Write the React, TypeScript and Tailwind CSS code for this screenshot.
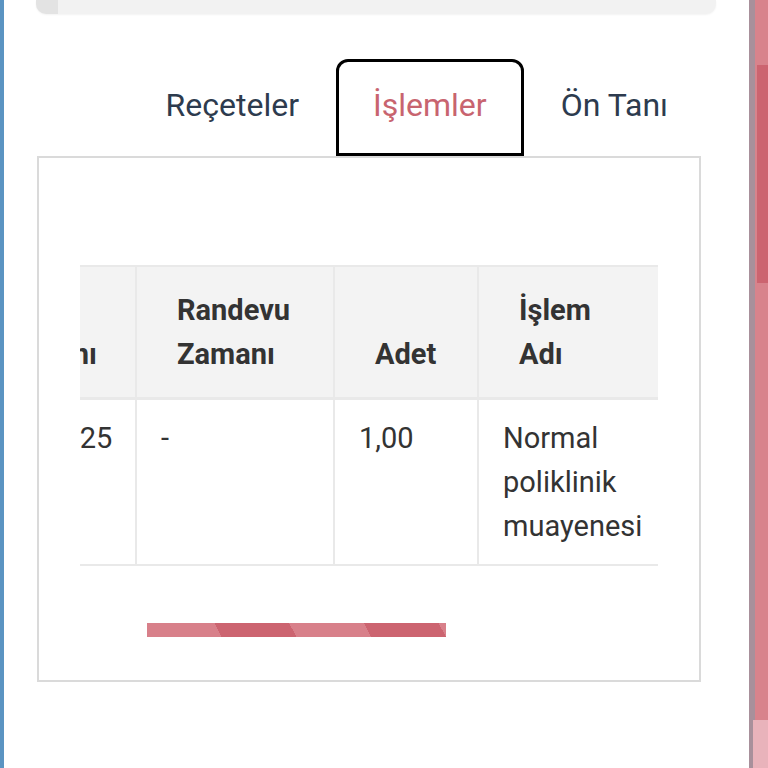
import { useLayoutEffect, useRef } from 'react';

type Row = {
  islemZamani: string;
  randevuZamani: string;
  adet: string;
  islemAdi: string;
  hekim: string;
  kurum: string;
};

const rows: Row[] = [
  {
    islemZamani: '5.01.2025',
    randevuZamani: '-',
    adet: '1,00',
    islemAdi: 'Normal poliklinik muayenesi',
    hekim: 'Dr. Ayşe Yılmaz',
    kurum: 'Devlet Hastanesi',
  },
];

const tabs = ['Reçeteler', 'İşlemler', 'Ön Tanı'];

function Tabs({ active }: { active: string }) {
  return (
    <div className="-mr-[4px] flex justify-end">
      {tabs.map(tab => (
        <button
          key={tab}
          className={
            tab === active
              ? 'h-[97px] rounded-t-[12px] border-[3px] border-black px-[34px] pb-[6px] text-[32px] text-[#c8646f]'
              : 'h-[97px] rounded-t-[12px] border-[3px] border-transparent px-[34px] pb-[6px] text-[32px] text-[#2d3b4e]'
          }
        >
          {tab}
        </button>
      ))}
    </div>
  );
}

function IslemTable() {
  const scrollRef = useRef<HTMLDivElement>(null);

  useLayoutEffect(() => {
    if (scrollRef.current) scrollRef.current.scrollLeft = 123;
  }, []);

  const th = 'border-x-2 border-[#e9e9e9] bg-[#f3f3f3] px-[40px] py-[21px] text-left align-bottom font-bold';
  const td = 'border-x-2 border-[#e9e9e9] px-[24px] py-[16px] align-top';

  return (
    <div ref={scrollRef} className="overflow-x-auto [scrollbar-width:none]">
      <table className="w-[1136px] table-fixed border-collapse text-[29px] leading-[44px] text-[#333]">
        <thead>
          <tr className="border-t-2 border-b-[3px] border-[#e9e9e9]">
            <th className={`${th} w-[178px]`}>İşlem Zamanı</th>
            <th className={`${th} w-[198px]`}>Randevu Zamanı</th>
            <th className={`${th} w-[144px]`}>Adet</th>
            <th className={`${th} w-[196px]`}>İşlem Adı</th>
            <th className={`${th} w-[210px]`}>Hekim</th>
            <th className={`${th} w-[210px]`}>Kurum</th>
          </tr>
        </thead>
        <tbody>
          {rows.map((r, i) => (
            <tr key={i} className="border-b-2 border-[#e9e9e9]">
              <td className={td}>{r.islemZamani}</td>
              <td className={td}>{r.randevuZamani}</td>
              <td className={td}>{r.adet}</td>
              <td className={td}>{r.islemAdi}</td>
              <td className={td}>{r.hekim}</td>
              <td className={td}>{r.kurum}</td>
            </tr>
          ))}
        </tbody>
      </table>
    </div>
  );
}

export default function App() {
  return (
    <div className="flex min-h-[768px] overflow-hidden bg-white font-['Roboto',sans-serif]">
      <div className="w-[4px] shrink-0 bg-[#5b94c2]" />

      <main className="flex min-w-0 flex-1 flex-col">
        {/* card above, cut off by the screen */}
        <div className="ml-[32px] mr-[33px] flex h-[14px] overflow-hidden rounded-b-[10px] bg-[#f2f2f2] shadow-[0_1px_2px_rgba(0,0,0,0.05)]">
          <div className="w-[22px] bg-[#e3e3e3]" />
        </div>

        <div className="ml-[33px] mr-[48px] mt-[45px] min-w-0">
          <Tabs active="İşlemler" />

          <div className="h-[526px] min-w-0 border-2 border-[#dadada] px-[41px] pt-[107px]">
            <IslemTable />
            <div className="ml-[67px] mt-[57px] h-[14px] w-[299px] bg-[repeating-linear-gradient(62deg,#d8808a_0px,#d8808a_66px,#cc6470_66px,#cc6470_132px)]" />
          </div>
        </div>
      </main>

      {/* edge of the next page */}
      <div className="flex w-[19px] shrink-0">
        <div className="w-[6px] bg-[#a8909b]" />
        <div className="flex flex-1 flex-col bg-[#d8838c]">
          <div className="ml-[2px] mt-[65px] h-[218px] bg-[#cc6470]" />
          <div className="flex-1" />
          <div className="-ml-[2px] h-[48px] bg-[#e9b3bb]" />
        </div>
      </div>
    </div>
  );
}
